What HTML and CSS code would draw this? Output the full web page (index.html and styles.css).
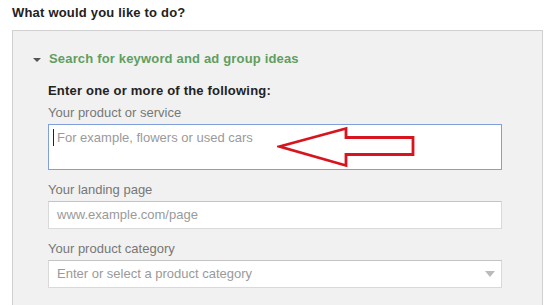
FILE: index.html
```html
<!DOCTYPE html>
<html lang="en">
<head>
    <meta charset="UTF-8">
    <meta name="viewport" content="width=device-width, initial-scale=1.0">
    <title>What would you like to do?</title>
    <link rel="stylesheet" href="styles.css">
</head>
<body>
    <div class="page">
        <h1 class="title">What would you like to do?</h1>

        <div class="panel">
            <div class="toggle">
                <span class="toggle-arrow"></span>
                <span class="toggle-text">Search for keyword and ad group ideas</span>
            </div>

            <div class="section">
                <div class="section-title">Enter one or more of the following:</div>

                <div class="field">
                    <label class="field-label">Your product or service</label>
                    <div class="input input-big focused">
                        <span class="caret"></span>
                        <span class="placeholder">For example, flowers or used cars</span>
                        <!-- red callout arrow drawn over the box -->
                        <svg class="callout" width="140" height="44" viewBox="0 0 140 44">
                            <path d="M2.5 21.5 L69 3.5 L69 12.5 L136 12.5 L136 29.5 L69 29.5 L69 40.5 Z"
                                  fill="none" stroke="#d8141f" stroke-width="2.8" stroke-linejoin="miter"/>
                        </svg>
                    </div>
                </div>

                <div class="field">
                    <label class="field-label">Your landing page</label>
                    <div class="input">
                        <span class="placeholder">www.example.com/page</span>
                    </div>
                </div>

                <div class="field">
                    <label class="field-label">Your product category</label>
                    <div class="input select">
                        <span class="placeholder">Enter or select a product category</span>
                        <span class="select-arrow"></span>
                    </div>
                </div>
            </div>
        </div>
    </div>
</body>
</html>
```

FILE: styles.css
```css
body {
    margin: 0;
    font-family: "Liberation Sans", Arial, sans-serif;
    font-size: 13px;
    line-height: 16px;
    background-color: #fff;
    color: #222;
}
.page {
    padding: 5px 11px 0 12px;
}
.title {
    margin: 0;
    font-size: 13px;
    line-height: 16px;
    font-weight: bold;
    letter-spacing: 0.2px;
    color: #222;
}
.panel {
    margin-top: 9px;
    border: 1px solid #d0d0d0;
    background-color: #f1f1f1;
    padding: 20px 40px 20px 20px;
}
.toggle {
    display: flex;
    align-items: center;
    gap: 8px;
}
.toggle-arrow {
    width: 0;
    height: 0;
    border-left: 4px solid transparent;
    border-right: 4px solid transparent;
    border-top: 4px solid #555;
    margin-top: 1px;
}
.toggle-text {
    font-weight: bold;
    letter-spacing: 0.17px;
    color: #5f9e62;
}
.section {
    margin: 16px 0 0 15px;
}
.section-title {
    font-weight: bold;
    letter-spacing: 0.2px;
    color: #222;
    margin-bottom: 6px;
}
.field {
    margin-bottom: 12px;
}
.field-label {
    display: block;
    color: #777;
    margin-bottom: 3px;
}
.input {
    position: relative;
    display: flex;
    align-items: center;
    box-sizing: border-box;
    height: 28px;
    padding: 0 6px 0 8px;
    background-color: #fff;
    border: 1px solid #d9d9d9;
    border-top-color: #c4c4c4;
}
.input-big {
    height: 46px;
    align-items: flex-start;
    padding: 4px 4px 0 4px;
}
.focused {
    border-color: #7f9fdd;
}
.caret {
    width: 1px;
    height: 17px;
    background-color: #222;
    margin-right: 3px;
}
.placeholder {
    color: #9a9a9a;
    flex: 1;
}
.input-big .placeholder {
    margin-top: 1px;
}
.select-arrow {
    width: 0;
    height: 0;
    border-left: 5px solid transparent;
    border-right: 5px solid transparent;
    border-top: 6px solid #bbb;
}
.callout {
    position: absolute;
    left: 228px;
    top: 0;
}
```
